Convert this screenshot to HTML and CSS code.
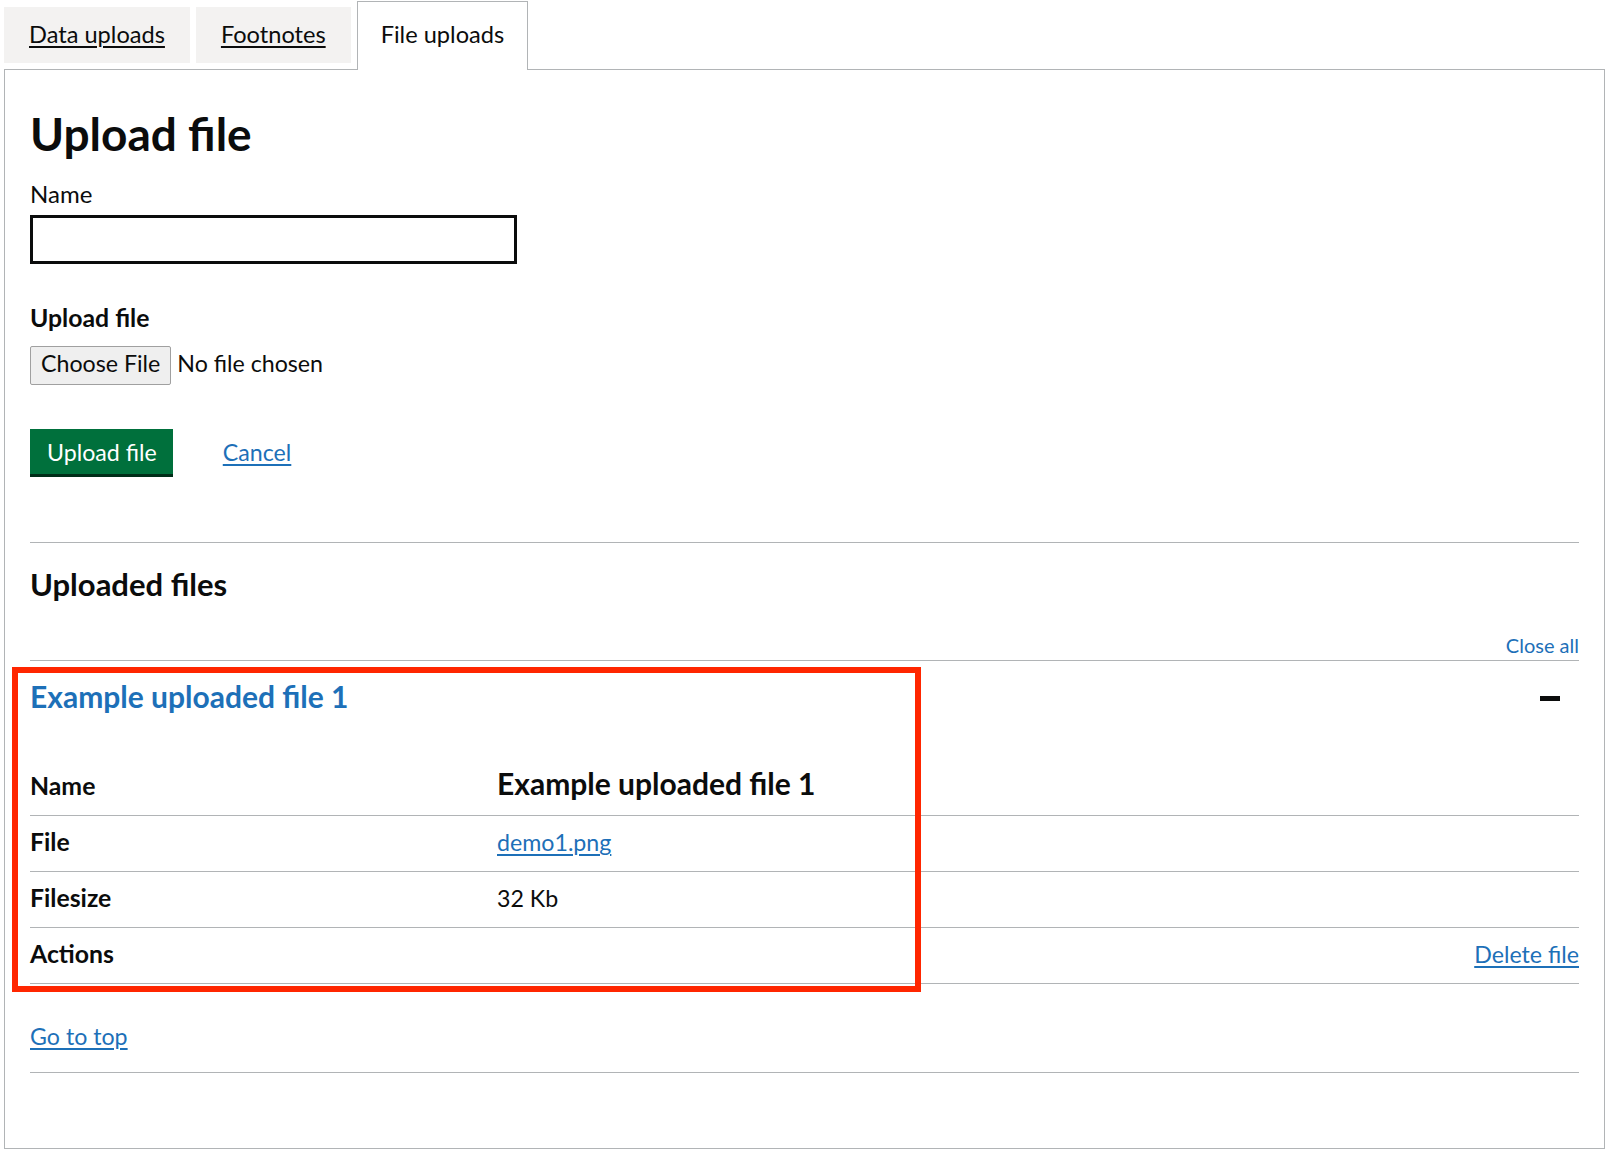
FILE: index.html
```html
<!DOCTYPE html>
<html lang="en">
<head>
<meta charset="utf-8">
<title>File uploads</title>
<link rel="stylesheet" href="styles.css">
</head>
<body>
<div class="page">
  <ul class="tabs-list">
    <li class="tab"><a class="tab-link" href="#data-uploads">Data uploads</a></li>
    <li class="tab"><a class="tab-link" href="#footnotes">Footnotes</a></li>
    <li class="tab tab-selected"><span class="tab-current">File uploads</span></li>
  </ul>
  <section class="panel" id="file-uploads">
    <h1 class="h1">Upload file</h1>
    <form class="form">
      <label class="label" for="name">Name</label>
      <input class="input" id="name" type="text">
      <div class="label label-bold upload-label">Upload file</div>
      <div class="file-input">
        <span class="file-btn">Choose File</span>
        <span class="file-status">No file chosen</span>
      </div>
      <div class="form-actions">
        <button class="btn" type="button">Upload file</button>
        <a class="link cancel" href="#">Cancel</a>
      </div>
    </form>
    <hr class="break">
    <h2 class="h2">Uploaded files</h2>
    <div class="accordion">
      <div class="accordion-controls"><button class="close-all" type="button">Close all</button></div>
      <div class="section">
        <div class="section-header">
          <h3 class="section-title">Example uploaded file 1</h3>
          <span class="minus"></span>
        </div>
        <dl class="summary">
          <div class="row"><dt class="key">Name</dt><dd class="val val-heading">Example uploaded file 1</dd></div>
          <div class="row"><dt class="key">File</dt><dd class="val"><a class="link" href="#">demo1.png</a></dd></div>
          <div class="row"><dt class="key">Filesize</dt><dd class="val">32 Kb</dd></div>
          <div class="row"><dt class="key">Actions</dt><dd class="val val-right"><a class="link" href="#">Delete file</a></dd></div>
        </dl>
        <div class="top-wrap"><a class="link" href="#">Go to top</a></div>
      </div>
    </div>
  </section>
  <div class="annotation"></div>
</div>
</body>
</html>
```
FILE: styles.css
```css
html, body {
  margin: 0;
  padding: 0;
  background: #fff;
}
body {
  font-family: "Lato", "Liberation Sans", sans-serif;
  color: #0b0c0c;
}
.page {
  position: relative;
  padding: 1px 7px 0 4px;
}
.tabs-list {
  display: flex;
  align-items: flex-start;
  gap: 6px;
  list-style: none;
  margin: 0;
  padding: 0;
  border-bottom: 1px solid #b1b4b6;
}
.tab {
  margin-top: 6px;
  padding: 12px 25px 13px;
  background: #f3f2f1;
  font-size: 23.6px;
  line-height: 31px;
}
.tab-link {
  color: #0b0c0c;
  text-decoration: underline;
  text-decoration-thickness: 2px;
  text-underline-offset: 3px;
}
.tab-selected {
  margin-top: 0;
  margin-bottom: -1px;
  padding: 17px 23px 20px;
  border: 1px solid #b1b4b6;
  border-bottom: 0;
  background: #fff;
}
.panel {
  border: 1px solid #b1b4b6;
  border-top: 0;
  padding: 39px 25px 75px 25px;
}
.h1 {
  margin: 0;
  font-size: 46px;
  line-height: 50px;
  font-weight: 700;
}
.form {
  margin: 0;
}
.label {
  display: block;
  margin-top: 20px;
  font-size: 24px;
  line-height: 30px;
}
.label-bold {
  font-weight: 700;
  font-size: 24.8px;
}
.upload-label {
  margin-top: 39px;
}
.input {
  display: block;
  box-sizing: border-box;
  margin-top: 6px;
  width: 487px;
  height: 49px;
  border: 3px solid #0b0c0c;
  border-radius: 0;
  padding: 0 8px;
  font: inherit;
  font-size: 24px;
}
.file-input {
  display: flex;
  align-items: baseline;
  gap: 6px;
  margin-top: 13px;
  font-size: 23.2px;
}
.file-btn {
  box-sizing: border-box;
  height: 39px;
  padding: 0 10px 4px;
  line-height: 33px;
  border: 1px solid #a0a0a0;
  border-radius: 2px;
  background: #efefef;
  color: #0b0c0c;
}
.file-status {
  line-height: 33px;
}
.form-actions {
  display: flex;
  align-items: baseline;
  gap: 50px;
  margin-top: 44px;
}
.btn {
  padding: 8px 16px 7px 17px;
  border: 0;
  border-radius: 0;
  background: #00703c;
  box-shadow: 0 3px 0 #002d18;
  color: #fff;
  font-family: inherit;
  font-size: 23.2px;
  line-height: 30px;
}
.link {
  color: #1d70b8;
  text-decoration: underline;
  text-decoration-thickness: 2px;
  text-underline-offset: 3px;
}
.cancel {
  font-size: 23.2px;
  line-height: 30px;
}
.break {
  margin: 68px 0 0;
  height: 0;
  border: 0;
  border-top: 1px solid #b1b4b6;
}
.h2 {
  margin: 23px 0 0;
  font-size: 31px;
  line-height: 36px;
  font-weight: 700;
}
.accordion-controls {
  margin-top: 31px;
  margin-bottom: 2px;
  text-align: right;
}
.close-all {
  padding: 0;
  border: 0;
  background: none;
  color: #1d70b8;
  font-family: inherit;
  font-size: 20px;
  line-height: 25px;
  vertical-align: top;
}
.section {
  border-top: 1px solid #b1b4b6;
  border-bottom: 1px solid #b1b4b6;
  padding-bottom: 21px;
}
.section-header {
  display: flex;
  justify-content: space-between;
  align-items: flex-start;
  padding-top: 17px;
}
.section-title {
  margin: 0;
  color: #1d70b8;
  font-size: 30px;
  line-height: 36px;
  font-weight: 700;
}
.minus {
  width: 20px;
  height: 5px;
  margin-top: 18px;
  margin-right: 19px;
  background: #0b0c0c;
}
.summary {
  margin: 40px 0 0;
}
.row {
  display: grid;
  grid-template-columns: 467px 1fr;
  align-items: baseline;
  padding: 11px 0 14px;
  border-bottom: 1px solid #b1b4b6;
  font-size: 23.2px;
  line-height: 30px;
}
.key {
  font-weight: 700;
  font-size: 24.8px;
}
.val {
  margin: 0;
}
.val-heading {
  font-size: 30px;
  line-height: 36px;
  font-weight: 700;
}
.val-right {
  text-align: right;
}
.top-wrap {
  margin-top: 37px;
  font-size: 23.2px;
  line-height: 30px;
}
.annotation {
  position: absolute;
  left: 12px;
  top: 667px;
  box-sizing: border-box;
  width: 909px;
  height: 325px;
  border: 6px solid #ff2600;
  pointer-events: none;
}
```
